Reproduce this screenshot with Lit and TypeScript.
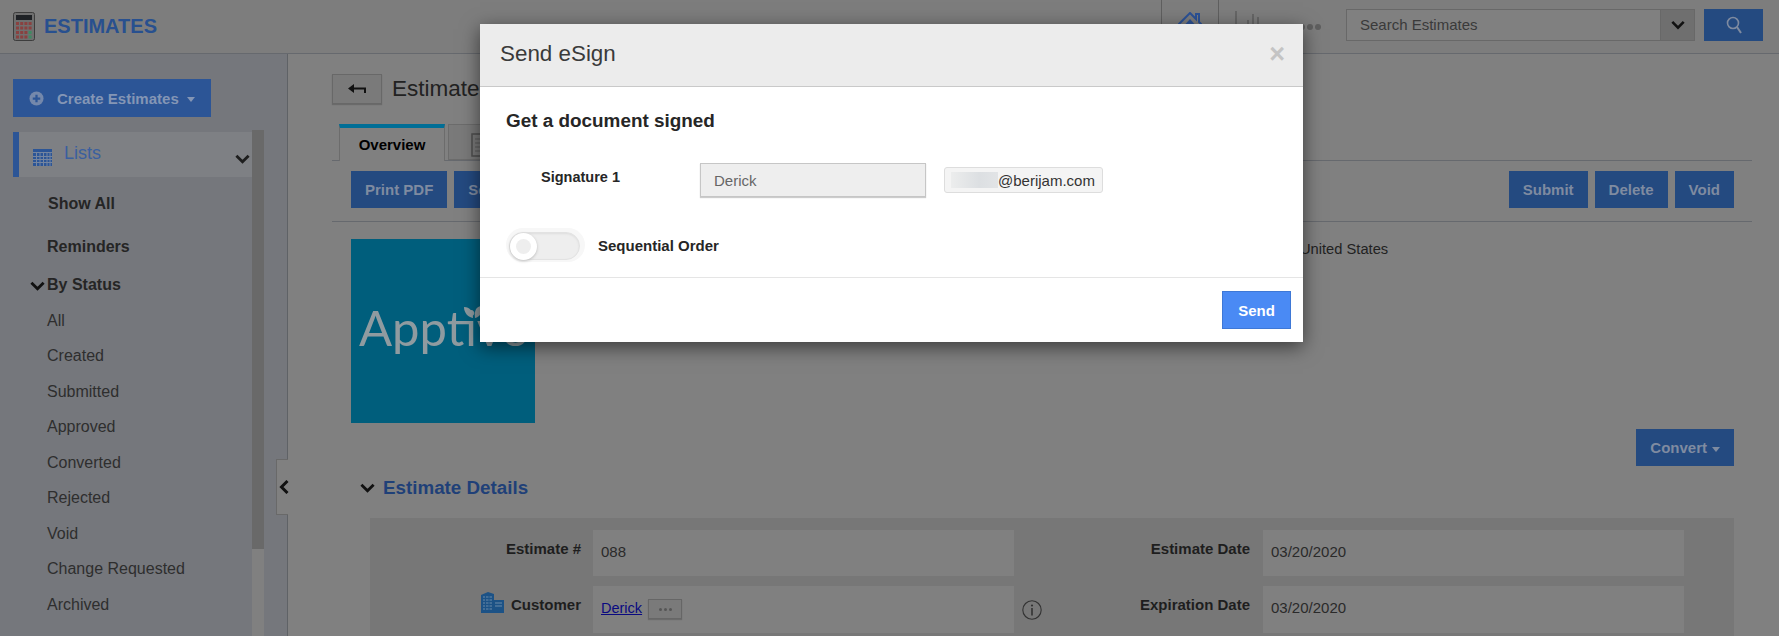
import { LitElement, html, svg, css } from "lit";
import { customElement } from "lit/decorators.js";

const chevron = (cls: string) => html`<svg class=${cls} viewBox="0 0 16 10"><path d="M1.500 1.500L8 8l6.500-6.500" fill="none" stroke="currentColor" stroke-width="3"/></svg>`;

const calculator = html`<svg class="calc" viewBox="0 0 22 29">
  <rect x=".5" y=".5" width="21" height="28" rx="2" fill="#6f6f6f" stroke="#3d3d3d"/>
  <rect x="3" y="3" width="16" height="5" fill="#1f2226"/>
  ${[0, 1, 2, 3].map((r) => [0, 1, 2, 3].map((c) => svg`<rect x=${3 + c * 4.2} y=${10 + r * 4.5} width="3" height="3" fill=${c === 3 && r > 1 ? "#3f8a62" : "#8a4140"}/>`))}
</svg>`;

const home = html`<svg class="home" viewBox="0 0 24 16">
  <path d="M0 13L12 1l6 6V2h3v8l3 3" fill="none" stroke="#2c5296" stroke-width="2"/>
  <path d="M4 16l8-9 8 9z" fill="#2c5296"/>
</svg>`;

const bars = html`<svg class="bars" viewBox="0 0 24 14">
  <path d="M1 0v14M13 9v5M18 3v11M23 6v8" stroke="#666" stroke-width="2" fill="none"/>
</svg>`;

const plusCircle = html`<svg class="plus" viewBox="0 0 16 16">
  <circle cx="8" cy="8" r="7.5" fill="#7488ab"/>
  <path d="M8 4v8M4 8h8" stroke="#2c5596" stroke-width="2.4"/>
</svg>`;

const gridIcon = html`<svg class="grid-icon" viewBox="0 0 19 17">
  <rect width="19" height="17" y="0" fill="#2c5596"/>
  <path d="M0 3.5h19M0 7.5h19M0 10.5h19M0 13.5h19M3.5 3v14M7 3v14M10.5 3v14M14 3v14M17 3v14" stroke="#75859f" stroke-width="1"/>
</svg>`;

const backArrow = html`<svg class="back-arrow" viewBox="0 0 18 12">
  <path d="M17 10V5.500H3" fill="none" stroke="#111" stroke-width="2"/>
  <path d="M0 5.500L6 1v9z" fill="#111"/>
</svg>`;

const docIcon = html`<svg class="doc-icon" viewBox="0 0 14 24">
  <rect x="1" y="1" width="20" height="22" fill="none" stroke="#4f4f4f" stroke-width="1.500"/>
  <path d="M4 6h12M4 10h12M4 14h12M4 18h5" stroke="#5a5a5a" stroke-width="1"/>
</svg>`;

const building = html`<svg class="building" viewBox="0 0 24 21">
  <path d="M1 3l7-3 6 2v19H1z" fill="#1c5286"/>
  <path d="M13 8h11v13H13z" fill="#1c5286"/>
  <path d="M3 5h9M3 8h9M3 11h9M3 14h9M3 17h9M15 11h7M15 14h7" stroke="#6a8aa8" stroke-width="1"/>
  <path d="M5.500 4v15M9 4v15" stroke="#1c5286" stroke-width="1"/>
</svg>`;

const infoIcon = html`<svg class="info" viewBox="0 0 20 20">
  <circle cx="10" cy="10" r="9.200" fill="none" stroke="#333" stroke-width="1.100"/>
  <circle cx="10" cy="5.500" r="1.100" fill="#333"/>
  <path d="M10 8v7.500" stroke="#333" stroke-width="1.600"/>
</svg>`;

const leaf = html`<svg class="leaf" viewBox="0 0 20 12">
  <path d="M1 1c6 0 9 4 9 11C5 11 1 7 1 1z" fill="#8f9ba0"/>
  <path d="M19 0c-6 0-8 5-7 12 5-1 8-6 7-12z" fill="#8f9ba0"/>
</svg>`;

@customElement("app-root")
export class AppRoot extends LitElement {
  static styles = css`
    :host {
      display: block;
      position: relative;
      width: 100%;
      height: 636px;
      overflow: hidden;
      background: #808080;
      color: #2a2a2a;
      font-family: "Liberation Sans", Arial, sans-serif;
      font-size: 15px;
    }
    * { box-sizing: border-box; }

    /* top bar */
    .top {
      height: 54px;
      display: flex;
      align-items: center;
      padding: 0 16px 0 13px;
      background: #7d7d7d;
      border-bottom: 1px solid #66696e;
    }
    .calc { width: 22px; height: 29px; margin-right: 9px; }
    .app-name { font-size: 20px; font-weight: bold; color: #28508f; }
    .top-right { margin-left: auto; display: flex; align-items: center; height: 100%; }
    .home-cell {
      width: 58px;
      height: 100%;
      display: flex;
      justify-content: center;
      padding-top: 12px;
      border-left: 1px solid #5f5f5f;
      border-right: 1px solid #5f5f5f;
    }
    .home { width: 24px; height: 16px; }
    .bars { width: 24px; height: 14px; margin: 0 0 18px 16px; }
    .dots { display: flex; gap: 2px; margin-left: 40px; }
    .dots i { width: 6px; height: 6px; border-radius: 50%; background: #5f5f5f; }
    .search {
      width: 349px;
      height: 32px;
      margin: 9px 9px 0 25px;
      display: flex;
      border: 1px solid #686868;
      background: #808080;
      align-self: flex-start;
    }
    .search-text { flex: 1; padding-left: 13px; line-height: 30px; color: #3a3a3a; }
    .search-drop {
      width: 34px;
      display: flex;
      align-items: center;
      justify-content: center;
      background: #6f6f6f;
      border-left: 1px solid #686868;
      color: #111;
    }
    .search-drop svg { width: 14px; height: 10px; }
    .search-btn {
      width: 59px;
      height: 32px;
      align-self: flex-start;
      margin-top: 9px;
      background: #244a80;
      display: flex;
      align-items: center;
      justify-content: center;
    }
    .search-btn svg { width: 16px; height: 18px; }

    .page { display: flex; height: 582px; }

    /* left side */
    .side {
      width: 288px;
      flex: none;
      background: #75777c;
      border-right: 1px solid #5f6266;
      padding-top: 25px;
    }
    .create {
      width: 198px;
      height: 38px;
      margin-left: 13px;
      display: flex;
      align-items: center;
      padding-left: 16px;
      background: #2c5596;
      color: #8496b5;
      font-size: 15px;
      font-weight: bold;
    }
    .plus { width: 15px; height: 15px; margin-right: 13px; }
    .caret {
      width: 0;
      height: 0;
      margin: 3px 0 0 8px;
      border-left: 4.500px solid transparent;
      border-right: 4.500px solid transparent;
      border-top: 5px solid currentColor;
    }
    .side-scroll { display: flex; margin-top: 13px; }
    .menu { width: 252px; flex: none; padding: 2px 0 0 13px; }
    .lists {
      height: 45px;
      display: flex;
      align-items: center;
      background: #7e8084;
      border-left: 6px solid #2c5596;
      padding-left: 14px;
      color: #3a5f9f;
      font-size: 18px;
    }
    .grid-icon { width: 19px; height: 17px; margin: 6px 12px 0 0; }
    .lists span { margin-bottom: 3px; }
    .lists svg.down { width: 15px; height: 10px; margin: 8px 2px 0 auto; color: #1e1e1e; }
    .menu-item {
      height: 35.500px;
      display: flex;
      align-items: center;
      padding-left: 34px;
      font-size: 16px;
      color: #2e2e2e;
    }
    .menu-item.strong { height: 36px; font-weight: bold; color: #252525; }
    .menu-item.show-all { margin-top: 9px; padding-left: 35px; }
    .menu-item.reminders { margin-top: 7px; }
    .menu-item.status { margin-top: 2px; }
    .menu-item svg { width: 15px; height: 10px; margin: 2px 2px 0 -17px; color: #111; }
    .menu-item svg.up { transform: rotate(180deg); }
    .scrollbar { width: 12px; height: 506px; background: #808080; }
    .thumb { height: 419px; background: #696969; }

    .collapse {
      position: absolute;
      left: 276px;
      top: 459px;
      width: 12px;
      height: 56px;
      display: flex;
      align-items: center;
      padding-left: 2px;
      background: #808080;
      border: 1px solid #696969;
      border-right: 0;
      color: #111;
    }
    .collapse svg { width: 10px; height: 14px; flex: none; }

    /* main column */
    .main { flex: 1; min-width: 0; padding: 20px 27px 0 44px; }
    .title-row { display: flex; align-items: center; height: 30px; }
    .back {
      width: 50px;
      height: 30px;
      display: flex;
      align-items: center;
      justify-content: center;
      background: #7a7a7a;
      border: 1px solid #686868;
      box-shadow: 0 1px 1px #6a6a6a;
    }
    .back-arrow { width: 18px; height: 12px; }
    .title { margin-left: 10px; font-size: 22.500px; color: #222; white-space: nowrap; }
    .tabs {
      display: flex;
      height: 37px;
      margin-top: 20px;
      padding-left: 7px;
      border-bottom: 1px solid #66696e;
    }
    .tab {
      width: 106px;
      height: 37px;
      display: flex;
      align-items: center;
      justify-content: center;
      background: #808080;
      border-top: 4px solid #006e96;
      border-left: 1px solid #6c6c6c;
      border-right: 1px solid #6c6c6c;
      color: #000;
      font-weight: bold;
    }
    .tab-other {
      width: 80px;
      height: 36px;
      margin-left: 3px;
      padding: 8px 0 0 22px;
      background: #7a7a7a;
      border: 1px solid #6c6c6c;
    }
    .doc-icon { width: 14px; height: 24px; display: block; overflow: hidden; }
    .toolbar {
      display: flex;
      gap: 7px;
      padding: 10px 18px 13px 19px;
      border-bottom: 1px solid #66696e;
    }
    .btn {
      height: 37px;
      padding: 0 14px;
      display: flex;
      align-items: center;
      background: #244a80;
      color: #7f8ba0;
      font-weight: bold;
      white-space: nowrap;
    }
    .spacer { margin-left: auto; }
    .brand {
      display: grid;
      grid-template-columns: 184px 1fr;
      margin-top: 17px;
      padding-left: 19px;
    }
    .logo {
      position: relative;
      height: 184px;
      padding: 58px 0 0 8px;
      background: #005e7c;
      color: #8f9ba0;
      font-family: Lato, sans-serif;
      font-size: 49px;
      font-weight: 400;
      line-height: 60px;
      overflow: hidden;
    }
    .leaf { position: absolute; left: 112px; top: 67px; width: 20px; height: 12px; }
    .address { padding: 2px 0 0 765px; white-space: nowrap; font-size: 14.700px; color: #222; }
    .convert-row { display: flex; justify-content: flex-end; padding: 6px 18px 0 0; }
    .convert-caret { margin-left: 5px; }
    .details-head {
      display: flex;
      align-items: center;
      height: 30px;
      margin-top: 7px;
      padding-left: 28px;
      color: #1f4078;
      font-size: 18.800px;
      font-weight: bold;
    }
    .details-head svg { width: 15px; height: 10px; margin-right: 8px; color: #111; }
    .panel {
      display: grid;
      grid-template-columns: 223px 421px 249px 421px;
      grid-template-rows: 46px 47px;
      row-gap: 10px;
      margin: 15px 18px 0 38px;
      padding-top: 12px;
      height: 140px;
      background: #777;
    }
    .label {
      display: flex;
      justify-content: flex-end;
      align-items: flex-start;
      padding: 10px 12px 0 0;
      line-height: 18px;
      font-weight: bold;
      color: #1e1e1e;
    }
    .label.wide { padding-right: 13px; }
    .label.with-info { justify-content: space-between; padding-left: 8px; }
    .building { width: 24px; height: 21px; margin: -4px 7px 0 0; }
    .info { width: 20px; height: 20px; margin-top: 4px; }
    .field {
      display: flex;
      align-items: flex-start;
      padding: 13px 0 0 8px;
      line-height: 18px;
      background: #808080;
      color: #2a2a2a;
    }
    .field a { color: #0a0a80; text-decoration: underline; font-size: 14.500px; }
    .more {
      width: 34px;
      height: 20px;
      margin-left: 6px;
      display: flex;
      align-items: center;
      justify-content: center;
      gap: 2px;
      background: #7a7a7a;
      border: 1px solid #666;
      box-shadow: 0 1px 1px #6a6a6a;
    }
    .more i { width: 3px; height: 3px; border-radius: 50%; background: #555; }

    /* dialog, lies over the page */
    .modal {
      position: absolute;
      left: 480px;
      top: 24px;
      width: 823px;
      height: 318px;
      display: flex;
      flex-direction: column;
      background: #fff;
      box-shadow: 0 5px 18px rgba(0, 0, 0, 0.55);
    }
    .modal-head {
      height: 63px;
      flex: none;
      display: flex;
      align-items: center;
      justify-content: space-between;
      padding: 0 18px 2px 20px;
      background: #ececec;
      border-bottom: 1px solid #c9c9c9;
      font-size: 22.400px;
      color: #3a3a3a;
    }
    .close { font-size: 27px; font-weight: bold; color: #c4c4c4; line-height: 20px; }
    .modal-body { flex: 1; padding: 23px 0 0 26px; }
    .modal-body h4 {
      margin: 0;
      font-size: 18.900px;
      line-height: 22px;
      font-weight: bold;
      color: #262626;
    }
    .sig-row { display: flex; align-items: center; height: 34px; margin-top: 31px; padding-left: 35px; }
    .sig-label {
      width: 159px;
      margin-bottom: 6px;
      font-size: 14.500px;
      font-weight: bold;
      color: #262626;
    }
    .sig-input {
      width: 226px;
      height: 34px;
      padding-left: 13px;
      line-height: 33px;
      background: #eee;
      border: 1px solid #c6c6c6;
      box-shadow: 0 1px 1px #ccc;
      color: #666;
    }
    .chip {
      width: 159px;
      height: 26px;
      margin-left: 18px;
      display: flex;
      align-items: center;
      padding-left: 6px;
      background: #f4f4f4;
      border: 1px solid #ddd;
      border-radius: 3px;
      color: #333;
    }
    .blur {
      width: 47px;
      height: 16px;
      background: linear-gradient(90deg, #eceded, #dcdfe2 60%, #e2e4e6);
    }
    .order-row { display: flex; align-items: center; margin-top: 31px; height: 34px; }
    .toggle {
      position: relative;
      width: 79px;
      height: 34px;
      padding: 4px 5px 2px 3px;
      border-radius: 17px;
      background: #f7f7f7;
    }
    .track {
      height: 100%;
      border-radius: 14px;
      background: #eee;
      border: 1px solid #e2e2e2;
      box-shadow: inset 0 1px 2px #ddd;
    }
    .knob {
      position: absolute;
      left: 4px;
      top: 5px;
      width: 27px;
      height: 27px;
      border-radius: 50%;
      background: #fff;
      box-shadow: 0 1px 3px #bbb;
      display: flex;
      align-items: center;
      justify-content: center;
    }
    .knob i { width: 15px; height: 15px; border-radius: 50%; background: #eee; }
    .order-label { margin-left: 13px; font-weight: bold; color: #262626; }
    .modal-foot {
      height: 65px;
      flex: none;
      display: flex;
      justify-content: flex-end;
      padding: 13px 12px 0 0;
      border-top: 1px solid #e5e5e5;
    }
    .send {
      width: 69px;
      height: 38px;
      display: flex;
      align-items: center;
      justify-content: center;
      background: #4a8af4;
      border: 1px solid #3e78d6;
      color: #fff;
      font-weight: bold;
    }
  `;

  render() {
    const statuses = ["All", "Created", "Submitted", "Approved", "Converted", "Rejected", "Void", "Change Requested", "Archived"];
    return html`
      <div class="top">
        ${calculator}
        <div class="app-name">ESTIMATES</div>
        <div class="top-right">
          <div class="home-cell">${home}</div>
          ${bars}
          <div class="dots"><i></i><i></i><i></i></div>
          <div class="search">
            <div class="search-text">Search Estimates</div>
            <div class="search-drop">${chevron("")}</div>
          </div>
          <div class="search-btn">
            <svg viewBox="0 0 16 18"><circle cx="7" cy="7" r="5.500" fill="none" stroke="#7f8ba0" stroke-width="1.600"/><path d="M11 11l4 6" stroke="#7f8ba0" stroke-width="2"/></svg>
          </div>
        </div>
      </div>

      <div class="page">
        <div class="side">
          <div class="create">${plusCircle}Create Estimates<span class="caret"></span></div>
          <div class="side-scroll">
            <div class="menu">
              <div class="lists">${gridIcon}<span>Lists</span>${chevron("down")}</div>
              <div class="menu-item strong show-all">Show All</div>
              <div class="menu-item strong reminders">Reminders</div>
              <div class="menu-item strong status">${chevron("")}By Status</div>
              ${statuses.map((s) => html`<div class="menu-item">${s}</div>`)}
              <div class="menu-item">${chevron("up")}</div>
            </div>
            <div class="scrollbar"><div class="thumb"></div></div>
          </div>
        </div>

        <div class="main">
          <div class="title-row">
            <div class="back">${backArrow}</div>
            <div class="title">Estimate</div>
          </div>
          <div class="tabs">
            <div class="tab">Overview</div>
            <div class="tab-other">${docIcon}</div>
          </div>
          <div class="toolbar">
            <div class="btn">Print PDF</div>
            <div class="btn">Send</div>
            <div class="btn spacer">Submit</div>
            <div class="btn">Delete</div>
            <div class="btn">Void</div>
          </div>
          <div class="brand">
            <div class="logo">Apptivo${leaf}</div>
            <div class="address">United States</div>
          </div>
          <div class="convert-row">
            <div class="btn">Convert<span class="caret convert-caret"></span></div>
          </div>
          <div class="details-head">${chevron("")}Estimate Details</div>
          <div class="panel">
            <div class="label">Estimate #</div>
            <div class="field">088</div>
            <div class="label wide">Estimate Date</div>
            <div class="field">03/20/2020</div>
            <div class="label">${building}Customer</div>
            <div class="field"><a>Derick</a><div class="more"><i></i><i></i><i></i></div></div>
            <div class="label wide with-info">${infoIcon}Expiration Date</div>
            <div class="field">03/20/2020</div>
          </div>
        </div>
      </div>

      <div class="collapse">
        <svg viewBox="0 0 10 14"><path d="M8.500 1L2.500 7l6 6" fill="none" stroke="currentColor" stroke-width="3"/></svg>
      </div>

      <div class="modal">
        <div class="modal-head"><span>Send eSign</span><span class="close">×</span></div>
        <div class="modal-body">
          <h4>Get a document signed</h4>
          <div class="sig-row">
            <div class="sig-label">Signature 1</div>
            <div class="sig-input">Derick</div>
            <div class="chip"><span class="blur"></span>@berijam.com</div>
          </div>
          <div class="order-row">
            <div class="toggle"><div class="track"></div><div class="knob"><i></i></div></div>
            <div class="order-label">Sequential Order</div>
          </div>
        </div>
        <div class="modal-foot"><div class="send">Send</div></div>
      </div>
    `;
  }
}
